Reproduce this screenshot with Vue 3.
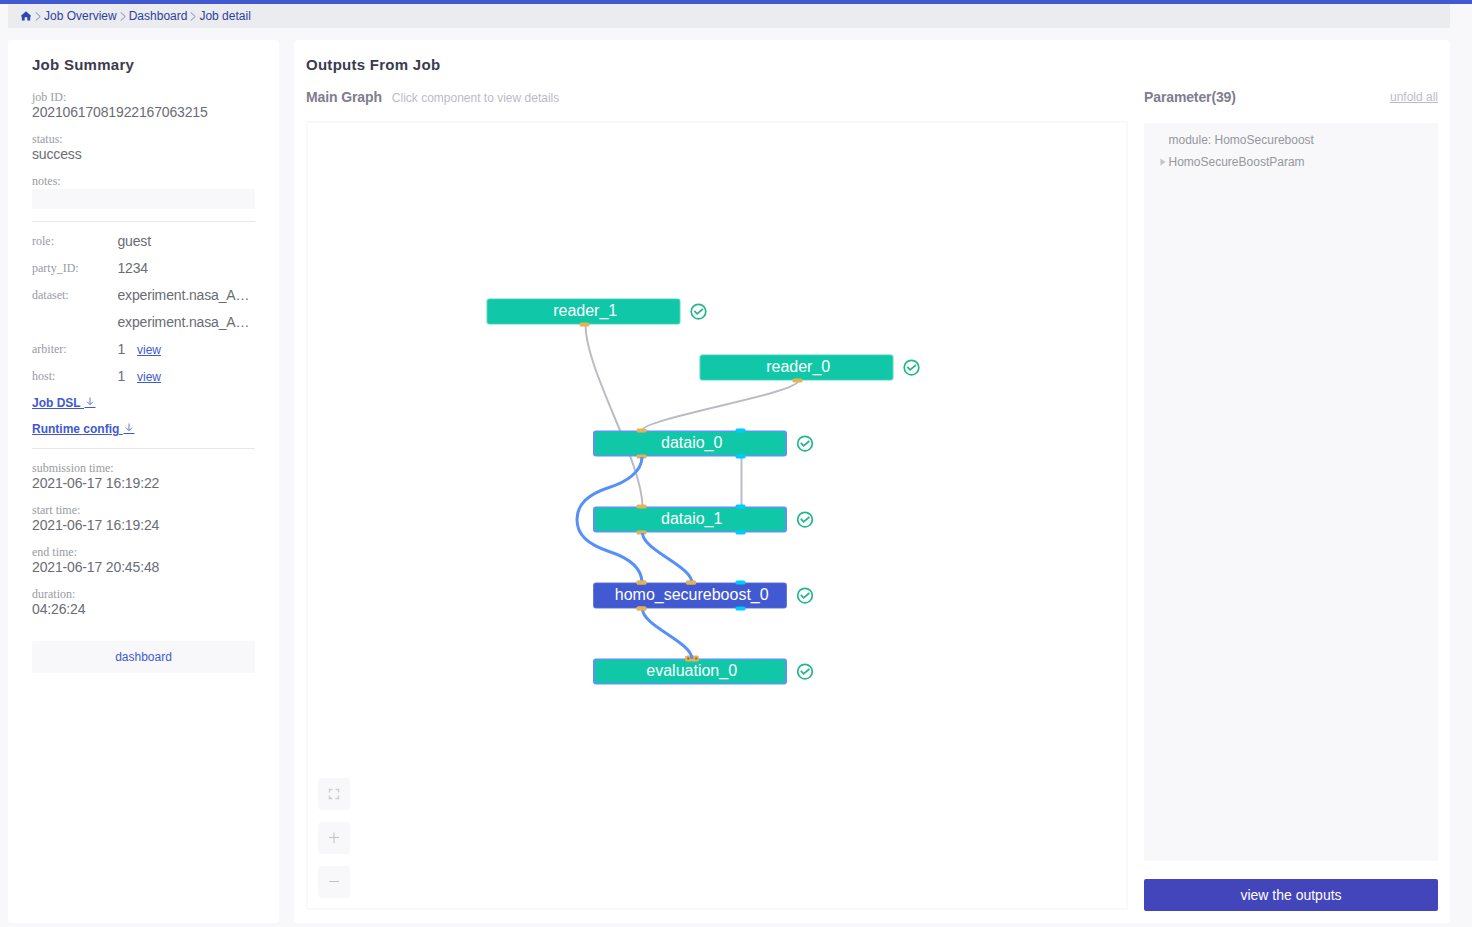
<script setup>
const crumbs = ['Job Overview', 'Dashboard', 'Job detail']
const facts = [
  { label: 'job ID:', value: '20210617081922167063215' },
  { label: 'status:', value: 'success' },
]
const details = [
  { label: 'role:', value: 'guest' },
  { label: 'party_ID:', value: '1234' },
  { label: 'dataset:', value: 'experiment.nasa_A…' },
  { label: '', value: 'experiment.nasa_A…' },
  { label: 'arbiter:', value: '1', view: true },
  { label: 'host:', value: '1', view: true },
]
const downloads = ['Job DSL', 'Runtime config']
const times = [
  { label: 'submission time:', value: '2021-06-17 16:19:22' },
  { label: 'start time:', value: '2021-06-17 16:19:24' },
  { label: 'end time:', value: '2021-06-17 20:45:48' },
  { label: 'duration:', value: '04:26:24' },
]

// Graph coordinates are relative to the canvas' top-left corner.
const nodes = [
  { name: 'reader_1', x: 180.5, y: 177.5, kind: 'plain', ports: [[98, 26, 'data']] },
  { name: 'reader_0', x: 393.5, y: 233.5, kind: 'plain', ports: [[98, 26, 'data']] },
  { name: 'dataio_0', x: 287, y: 309.5, kind: 'linked', ports: [[48.5, 0, 'data'], [147.5, 0, 'model'], [48.5, 26, 'data'], [147.5, 26, 'model']] },
  { name: 'dataio_1', x: 287, y: 385.5, kind: 'linked', ports: [[48.5, 0, 'data'], [147.5, 0, 'model'], [48.5, 26, 'data'], [147.5, 26, 'model']] },
  { name: 'homo_secureboost_0', x: 287, y: 461.5, kind: 'active', ports: [[48.5, 0, 'data'], [98, 0, 'data'], [147.5, 0, 'model'], [48.5, 26, 'data'], [147.5, 26, 'model']] },
  { name: 'evaluation_0', x: 287, y: 537.5, kind: 'linked', ports: [], multi: true },
]
const grayEdges = [
  'M279.5 204C279.5 249.5 336.5 340.5 336.5 386',
  'M492 260C492 272.5 336 297.5 336 309.5',
  'M435.5 336V386',
]
const blueEdges = [
  'M336 336C336 351 320 361 303 366.5C282 373.5 271 383 271 398.5C271 414 282 423.5 303 430.5C320 436 336 446 336 462',
  'M336.5 412C336.5 429 386 445 386 462',
  'M336.5 488C336.5 505 386 521 386 538',
]
</script>

<template>
  <div class="page">
    <div class="topbar"></div>
    <nav class="crumbs">
      <svg class="home" width="10" height="10" viewBox="0 0 10 10"><path d="M5 0.2L0 4.8V5.6H0.8V9.6H3.7V6.3H6.3V9.6H9.2V5.6H10V4.8Z" /></svg>
      <template v-for="c in crumbs" :key="c">
        <svg class="sep" width="6" height="9" viewBox="0 0 6 9"><path d="M0.7 0.3L5.2 4.5L0.7 8.7" /></svg>
        <span>{{ c }}</span>
      </template>
    </nav>

    <main class="columns">
      <aside class="summary">
        <h2>Job Summary</h2>
        <div v-for="f in facts" :key="f.label" class="fact">
          <div class="label">{{ f.label }}</div>
          <div class="value">{{ f.value }}</div>
        </div>
        <div class="label">notes:</div>
        <div class="notes"></div>
        <div class="rule"></div>
        <div class="details">
          <div v-for="(d, i) in details" :key="i" class="detail">
            <span class="label">{{ d.label }}</span>
            <span class="value">{{ d.value }}</span>
            <a v-if="d.view" class="view">view</a>
          </div>
        </div>
        <div v-for="d in downloads" :key="d" class="download">
          <a>{{ d }}&nbsp;<svg width="12" height="12" viewBox="0 0 12 12"><path d="M6 0.5V7.5M3 4.7L6 7.7L9 4.7" /><path class="base" d="M0.5 10.5H11.5" /></svg></a>
        </div>
        <div class="rule second"></div>
        <div v-for="t in times" :key="t.label" class="fact">
          <div class="label">{{ t.label }}</div>
          <div class="value">{{ t.value }}</div>
        </div>
        <button class="dashboard">dashboard</button>
      </aside>

      <section class="outputs">
        <h2>Outputs From Job</h2>
        <div class="body">
          <div class="graph-col">
            <div class="heading"><b>Main Graph</b><span class="hint">Click component to view details</span></div>
            <div class="canvas">
              <svg class="graph" width="822" height="789" viewBox="0 0 822 789">
                <path v-for="e in grayEdges" :key="e" :d="e" class="edge gray" />
                <g v-for="n in nodes" :key="n.name" :transform="`translate(${n.x} ${n.y})`">
                  <rect width="194" height="26" rx="3" :class="['frame', n.kind]" />
                  <rect :x="n.kind === 'linked' ? 2 : 1" :y="n.kind === 'linked' ? 1.5 : 0.7" :width="n.kind === 'linked' ? 190 : 192" :height="n.kind === 'linked' ? 23 : 24.6" rx="2.5" :class="['fill', n.kind]" />
                  <text x="98.7" y="17.5" text-anchor="middle">{{ n.name }}</text>
                  <g class="ok" transform="translate(212 13.1)">
                    <circle r="7.3" />
                    <path d="M-4.2 -0.7L-1.4 2.3L4.4 -2.6" />
                  </g>
                </g>
                <g v-for="n in nodes" :key="n.name + '-ports'" :transform="`translate(${n.x} ${n.y})`">
                  <rect v-for="(p, i) in n.ports" :key="i" :x="p[0] - 5" :y="p[1] - 2" width="10" height="4" rx="1.6" :class="p[2]" />
                  <g v-if="n.multi">
                    <rect x="92" y="-3" width="14" height="6" rx="2" class="data" />
                    <circle cx="95.3" cy="0" r="1.2" class="dot" />
                    <circle cx="103.2" cy="0" r="1.2" class="dot" />
                  </g>
                </g>
                <path v-for="e in blueEdges" :key="e" :d="e" class="edge blue" />
                <rect x="330.5" y="485.5" width="10" height="4" rx="1.6" class="data" />
                <rect x="330.5" y="459.5" width="10" height="4" rx="1.6" class="data" />
                <rect x="380" y="459.5" width="10" height="4" rx="1.6" class="data" />
              </svg>
              <div class="tools">
                <button><svg width="12" height="12" viewBox="0 0 12 12"><path class="thick" d="M1.5 4.5V1.5H4.5M7.5 1.5H10.5V4.5M10.5 7.5V10.5H7.5M4.5 10.5H1.5V7.5" /></svg></button>
                <button><svg width="12" height="12" viewBox="0 0 12 12"><path class="faint" d="M6 0.5V11" /><path d="M1 5.5H11" /></svg></button>
                <button><svg width="12" height="12" viewBox="0 0 12 12"><path d="M1 5.5H11" /></svg></button>
              </div>
            </div>
          </div>
          <div class="param-col">
            <div class="heading"><b>Parameter(39)</b><a class="unfold">unfold all</a></div>
            <div class="params">
              <div class="param">module: HomoSecureboost</div>
              <div class="param"><svg class="caret" width="6" height="8" viewBox="0 0 6 8"><path d="M0.5 0.5L5.5 4L0.5 7.5Z" /></svg>HomoSecureBoostParam</div>
            </div>
            <button class="view-outputs">view the outputs</button>
          </div>
        </div>
      </section>
    </main>
  </div>
</template>

<style>
body { margin: 0; overflow: hidden; background: #f8f8fa; }
</style>

<style scoped>
.page { box-sizing: border-box; width: 1472px; height: 927px; background: #f8f8fa; font-family: "Liberation Sans", Arial, sans-serif; color: #6a6c75; }
.page * { box-sizing: border-box; }
button { border: 0; padding: 0; font-family: inherit; }
.topbar { height: 4px; background: #4159d1; }
.crumbs { display: flex; align-items: center; height: 24px; margin: 0 22px 0 8px; padding-left: 13px; background: #ebecf0; color: #2e409f; font-size: 12px; }
.home { fill: #3145b0; margin-right: 4px; }
.sep { margin: 0 3px 0 0; fill: none; stroke: #7f86ba; }
.crumbs span { margin-right: 3px; }
.columns { display: flex; gap: 15px; height: 883px; margin: 12px 22px 0 8px; }
.summary { width: 271px; padding: 16px 24px 0; background: #fff; border-radius: 4px; }
.outputs { flex: 1; padding: 16px 12px 0; background: #fff; border-radius: 4px; }
h2 { margin: 0; height: 18px; line-height: 18px; font-size: 15px; letter-spacing: 0.27px; color: #3a3b50; }
.summary h2 { margin-bottom: 16px; }
.label { height: 15px; line-height: 15px; font-family: "Liberation Serif", "Times New Roman", serif; font-size: 12px; color: #999ba3; }
.value { height: 15px; line-height: 15px; font-size: 14px; letter-spacing: -0.15px; color: #6a6c75; white-space: nowrap; }
.fact { height: 30px; margin-bottom: 12px; }
.notes { height: 20px; background: #f8f8fa; }
.rule { height: 1px; margin-top: 12px; background: #e6e6ef; }
.details { padding-top: 6px; }
.detail { display: flex; align-items: center; height: 27px; }
.detail .label { width: 85.4px; }
.view { margin: 1px 0 0 12px; font-size: 12px; text-decoration: underline; color: #4159d1; }
.download { height: 26px; line-height: 26px; font-size: 12px; font-weight: bold; color: #4159d1; }
.download a { text-decoration: underline; }
.download svg { vertical-align: -2px; fill: none; stroke: #6578da; stroke-width: 1; }
.download .base { stroke: #4159d1; }
.rule.second { margin: 6px 0 12px; background: #e8e8eb; }
.dashboard { display: block; width: 100%; height: 32px; margin-top: 24px; border-radius: 2px; background: #f8f8fb; color: #4159d1; font-size: 12px; }
.body { display: flex; justify-content: space-between; }
.graph-col { width: 822px; }
.param-col { width: 294px; }
.heading { display: flex; align-items: center; height: 47px; font-size: 14px; color: #7f7d8e; padding-bottom: 1px; }
.heading b { letter-spacing: -0.12px; }
.hint { margin: 1px 0 0 10px; font-size: 12px; color: #bbbbc8; }
.unfold { margin-left: auto; font-size: 12px; color: #bbbbc8; text-decoration: underline; }
.canvas { position: relative; height: 789px; background: #fff; box-shadow: inset 0 0 0 2px #f9f9fb; }
.graph { display: block; }
.graph text { font-size: 16px; fill: #fff; }
.edge { fill: none; }
.edge.gray { stroke: #bbbbc8; stroke-width: 2; }
.edge.blue { stroke: #5690fb; stroke-width: 3; }
.frame.plain { fill: #59d9bf; }
.frame.linked { fill: #5c93fa; }
.frame.active { fill: #6579db; }
.fill { fill: #10c8a7; }
.fill.active { fill: #4159d1; }
.data { fill: #e5b355; }
.model { fill: #00cbff; }
.dot { fill: #a86f25; }
.ok circle, .ok path { fill: none; stroke: #24b68b; stroke-width: 1.7; }
.tools { position: absolute; left: 12px; bottom: 12px; display: flex; flex-direction: column; gap: 12px; }
.tools button { display: flex; align-items: center; justify-content: center; width: 32px; height: 32px; border-radius: 4px; background: #f8f8fa; }
.tools path { fill: none; stroke: #c2c2cd; stroke-width: 1; }
.tools .faint { stroke: #dadae1; stroke-width: 2; }
.tools .thick { stroke: #cdcdd6; stroke-width: 1.5; }
.params { height: 738px; margin-top: 2px; padding: 6px 0 0 24.5px; background: #f8f8fa; }
.param { position: relative; height: 22px; line-height: 22px; font-size: 12px; color: #96969d; }
.caret { position: absolute; left: -8.5px; top: 7px; fill: #c0c4cc; }
.view-outputs { display: block; width: 100%; height: 32px; margin-top: 18px; border-radius: 2px; background: #4346ba; color: #fff; font-size: 14px; }
</style>
